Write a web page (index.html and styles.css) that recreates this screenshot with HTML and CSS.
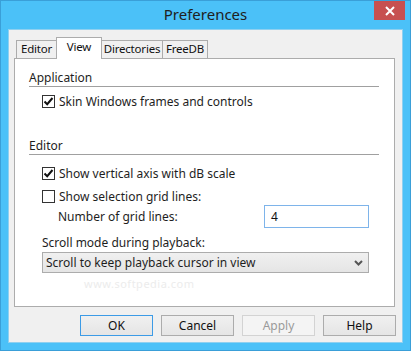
FILE: index.html
```html
<!DOCTYPE html>
<html lang="en">
<head>
  <meta charset="UTF-8">
  <title>Preferences</title>
  <link rel="stylesheet" href="styles.css">
</head>
<body>

  <!-- Dialog window -->
  <div class="window">
    <div class="titlebar">
      <span></span>
      <span class="title">Preferences</span>
      <button class="close-btn" aria-label="Close">
        <svg width="10" height="10" viewBox="0 0 10 10">
          <path d="M1 1 L9 9 M9 1 L1 9" stroke="#fff" stroke-width="2" fill="none"/>
        </svg>
      </button>
    </div>

    <div class="client">
      <!-- Tabs -->
      <div class="tabs">
        <div class="tab tab-editor">Editor</div>
        <div class="tab tab-view active">View</div>
        <div class="tab tab-dirs">Directories</div>
        <div class="tab tab-freedb">FreeDB</div>
      </div>

      <!-- View page -->
      <div class="panel">
        <div class="group-title first">Application</div>
        <label class="check-row row-skin">
          <span class="checkbox checked">
            <svg width="11" height="11" viewBox="0 0 11 11"><path d="M1.5 5.5 L4.2 8.2 L9.5 2" stroke="#111" stroke-width="2" fill="none"/></svg>
          </span>
          Skin Windows frames and controls
        </label>

        <div class="group-title second">Editor</div>
        <label class="check-row row-axis">
          <span class="checkbox checked">
            <svg width="11" height="11" viewBox="0 0 11 11"><path d="M1.5 5.5 L4.2 8.2 L9.5 2" stroke="#111" stroke-width="2" fill="none"/></svg>
          </span>
          Show vertical axis with dB scale
        </label>
        <label class="check-row row-grid">
          <span class="checkbox"></span>
          Show selection grid lines:
        </label>
        <div class="field-row">
          <span class="field-label">Number of grid lines:</span>
          <div class="text-input">4</div>
        </div>

        <div class="scroll-label">Scroll mode during playback:</div>
        <div class="select">
          <span>Scroll to keep playback cursor in view</span>
          <svg width="9" height="6" viewBox="0 0 9 6"><path d="M1 1 L4.5 4.5 L8 1" stroke="#555" stroke-width="2" fill="none"/></svg>
        </div>

        <!-- watermark lying over the page -->
        <div class="watermark">www.softpedia.com</div>
      </div>

      <!-- Dialog buttons -->
      <div class="buttons">
        <button class="btn default">OK</button>
        <button class="btn">Cancel</button>
        <button class="btn disabled">Apply</button>
        <button class="btn">Help</button>
      </div>
    </div>
  </div>

</body>
</html>
```

FILE: styles.css
```css
/* Global Styles */
body {
  margin: 0;
  padding: 0;
  font-family: 'Noto Sans', 'Open Sans', sans-serif;
  font-size: 12px;
  color: #1e1e1e;
  background-color: #4bc1f8;
}

/* Window frame */
.window {
  width: 411px;
  height: 351px;
  box-sizing: border-box;
  background-color: #4bc1f8;
  border: 1px solid #3a9fd8;
  padding: 0 7px 7px 7px;
  display: flex;
  flex-direction: column;
}

.titlebar {
  height: 28px;
  display: grid;
  grid-template-columns: 1fr auto 1fr;
  align-items: start;
}

.title {
  font-size: 15px;
  color: #202020;
  line-height: 27px;
}

.close-btn {
  justify-self: end;
  margin-right: -2px;
  width: 31px;
  height: 19px;
  border: none;
  padding: 0;
  background-color: #c75050;
  display: flex;
  align-items: center;
  justify-content: center;
}

/* Client area */
.client {
  flex: 1;
  background-color: #f0f0f0;
  border: 1px solid #8fd0f0;
  display: flex;
  flex-direction: column;
  padding: 7px 7px 0 5px;
}

/* Tabs */
.tabs {
  display: flex;
  align-items: flex-end;
  height: 21px;
  margin-left: 2px;
  position: relative;
  z-index: 1;
}

.tab {
  box-sizing: border-box;
  height: 18px;
  border: 1px solid #acacac;
  border-bottom: none;
  background-color: #f0f0f0;
  text-align: center;
  line-height: 16px;
  font-size: 11.5px;
  letter-spacing: -0.2px;
  color: #111;
  white-space: nowrap;
}

.tab + .tab {
  margin-left: -1px;
}

.tab-editor { width: 41px; }
.tab-view { width: 46px; }
.tab-dirs { width: 62px; }
.tab-freedb { width: 46px; }

.tab.active {
  height: 22px;
  margin-bottom: -1px;
  background-color: #fff;
  line-height: 18px;
}

.panel {
  position: relative;
  height: 249px;
  box-sizing: border-box;
  background-color: #fff;
  border: 1px solid #acacac;
  padding: 0 14px 0 14px;
  display: flex;
  flex-direction: column;
}

.group-title {
  line-height: 16px;
  border-bottom: 1px solid #a0a0a0;
  margin-right: 1px;
}

.group-title.first { margin-top: 11px; }
.group-title.second { margin-top: 29px; }

.check-row {
  display: flex;
  align-items: center;
  gap: 4px;
  height: 16px;
  margin-left: 13px;
}

.row-skin { margin-top: 6px; }
.row-axis { margin-top: 10px; }
.row-grid { margin-top: 7px; }

.checkbox {
  width: 13px;
  height: 13px;
  box-sizing: border-box;
  border: 1px solid #333;
  background-color: #fff;
  display: flex;
  align-items: center;
  justify-content: center;
}

.field-row {
  display: flex;
  align-items: center;
  justify-content: space-between;
  margin: 1px 11px 0 29px;
}

.text-input {
  width: 105px;
  height: 23px;
  box-sizing: border-box;
  border: 1px solid #7eb4ea;
  padding-left: 6px;
  line-height: 21px;
  color: #111;
}

.scroll-label {
  margin: 7px 0 0 13px;
  line-height: 16px;
}

.select {
  margin: 1px 11px 0 13px;
  height: 21px;
  box-sizing: border-box;
  border: 1px solid #acacac;
  background: linear-gradient(#f0f0f0, #e5e5e5);
  display: flex;
  align-items: center;
  justify-content: space-between;
  padding: 0 5px 0 3px;
}

.watermark {
  position: absolute;
  left: 69px;
  top: 217px;
  font-size: 11px;
  letter-spacing: 0.5px;
  color: #ececec;
  pointer-events: none;
}

/* Buttons */
.buttons {
  display: flex;
  justify-content: flex-end;
  gap: 8px;
  margin-top: 8px;
  margin-right: -1px;
}

.btn {
  width: 73px;
  height: 21px;
  box-sizing: border-box;
  border: 1px solid #acacac;
  background: linear-gradient(#f0f0f0, #e5e5e5);
  font-family: inherit;
  font-size: 12px;
  color: #111;
  padding: 0;
}

.btn.default {
  border-color: #3c9be6;
}

.btn.disabled {
  border-color: #d3d3d3;
  background: #f4f4f4;
  color: #9a9a9a;
}
```
